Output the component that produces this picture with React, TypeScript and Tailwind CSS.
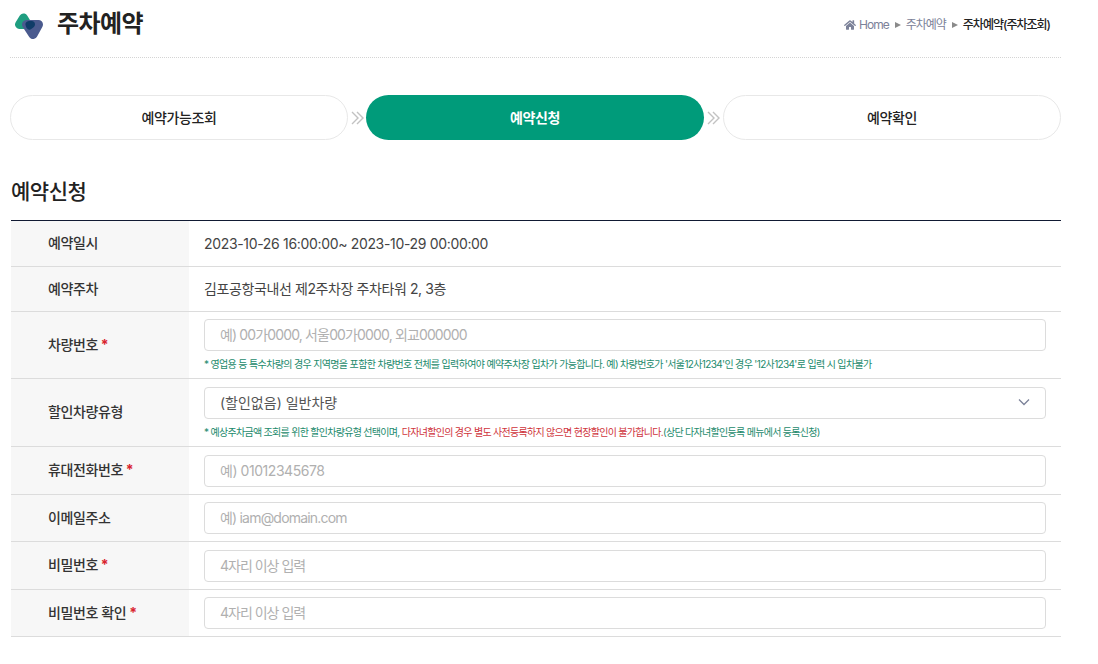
import React from "react";
import { FaHome } from "react-icons/fa";

const font = { fontFamily: '"Inter","Noto Sans CJK KR",sans-serif' };

function Chev() {
  return (
    <svg width="14" height="14" viewBox="0 0 14 14" className="shrink-0" fill="none" stroke="#c2c2c2" strokeWidth="1.4">
      <path d="M1 1l6 6-6 6M6 1l6 6-6 6" />
    </svg>
  );
}

function Label({ children, req }: { children: React.ReactNode; req?: boolean }) {
  return (
    <div className="w-[178px] shrink-0 bg-[#f7f7f7] pl-[37px] pb-[2px] flex items-center text-[14px] font-medium text-[#333] tracking-[-0.4px]">
      <span>
        {children}
        {req && <span className="text-[#d9232e] font-bold"> *</span>}
      </span>
    </div>
  );
}

function Field({ ph, track }: { ph: string; track: string }) {
  return (
    <div className={`h-[32px] border border-[#dcdcdc] rounded-[4px] bg-white flex items-center pl-[15px] pb-[1px] text-[14px] text-[#b0b0b0] ${track}`}>
      {ph}
    </div>
  );
}

function Row({ h, label, req, children }: { h: string; label: string; req?: boolean; children: React.ReactNode }) {
  return (
    <div className={`flex border-b border-[#dcdcdc] ${h}`}>
      <Label req={req}>{label}</Label>
      <div className="flex-1 pl-[15px] pr-[15px] flex flex-col justify-center">{children}</div>
    </div>
  );
}

export default function App() {
  return (
    <div style={font} className="w-[1098px] h-[664px] bg-white overflow-hidden pl-[10px] relative">
      <div className="w-[1051px]">
        <div className="h-[48px] flex items-center justify-between">
          <div className="flex items-center pl-[4px]">
            <svg width="30" height="28" viewBox="0 0 30 28" className="mt-[3px]">
              <path d="M9.500 6L5.500 12.500L13.500 12.500z" fill="#1f9e80" stroke="#1f9e80" strokeWidth="9" strokeLinejoin="round" />
              <path d="M12.500 12.500L24.500 12.500L19 22.500z" fill="#4a5a8e" stroke="#4a5a8e" strokeWidth="9" strokeLinejoin="round" />
              <path d="M15 12.500L17.500 12.500L15.500 14z" fill="#0f3c68" stroke="#0f3c68" strokeWidth="7" strokeLinejoin="round" />
            </svg>
            <h1 className="ml-[13px] text-[24px] leading-[30px] font-bold text-[#222] tracking-[-0.6px]">주차예약</h1>
          </div>
          <div className="flex items-center text-[12px] tracking-[-1px] text-[#7c8299] pr-[11px] mt-[2px]">
            <FaHome size={12} color="#7c8299" className="mr-[3px]" />
            <span>Home</span>
            <span className="ml-[6px] mr-[5px] w-0 h-0 border-y-[3.500px] border-y-transparent border-l-[6px] border-l-[#8a8a8a]" />
            <span>주차예약</span>
            <span className="ml-[6px] mr-[5px] w-0 h-0 border-y-[3.500px] border-y-transparent border-l-[6px] border-l-[#8a8a8a]" />
            <span className="text-[#222] font-medium">주차예약(주차조회)</span>
          </div>
        </div>
        <div className="mt-[9px] border-t border-dotted border-[#d4d4d4]" />

        <div className="mt-[37px] flex items-center">
          <div className="w-[338px] h-[45px] rounded-full border border-[#e8e8e8] flex items-center justify-center text-[14px] font-medium text-[#222] tracking-[-0.4px]">
            예약가능조회
          </div>
          <div className="w-[18px] flex justify-end pr-[1px]"><Chev /></div>
          <div className="w-[338px] h-[45px] rounded-full bg-[#009b7a] flex items-center justify-center text-[14px] font-bold text-white tracking-[-0.4px]">
            예약신청
          </div>
          <div className="w-[19px] flex justify-end pr-[2px]"><Chev /></div>
          <div className="w-[338px] h-[45px] rounded-full border border-[#e8e8e8] flex items-center justify-center text-[14px] font-medium text-[#222] tracking-[-0.4px]">
            예약확인
          </div>
        </div>

        <h2 className="mt-[37px] ml-[1px] text-[21px] leading-[30px] font-medium text-[#222] tracking-[-0.5px]">예약신청</h2>

        <div className="ml-[1px] mt-[13px] border-t border-[#111a33]">
          <Row h="h-[46px]" label="예약일시">
            <div className="text-[14px] text-[#444] tracking-[-0.33px]">2023-10-26 16:00:00~ 2023-10-29 00:00:00</div>
          </Row>
          <Row h="h-[45px]" label="예약주차">
            <div className="text-[14px] text-[#444] tracking-[-0.4px] pb-[1px]">김포공항국내선 제2주차장 주차타워 2, 3층</div>
          </Row>
          <Row h="h-[67px]" label="차량번호" req>
            <Field ph="예) 00가0000, 서울00가0000, 외교000000" track="tracking-[-0.86px]" />
            <div className="mt-[6px] text-[10px] leading-[14px] text-[#1c8a6c] tracking-[-0.65px] whitespace-nowrap">
              * 영업용 등 특수차량의 경우 지역명을 포함한 차량번호 전체를 입력하여야 예약주차장 입차가 가능합니다. 예) 차량번호가 '서울12사1234'인 경우 '12사1234'로 입력 시 입차불가
            </div>
          </Row>
          <Row h="h-[68px]" label="할인차량유형">
            <div className="h-[32px] border border-[#dcdcdc] rounded-[4px] bg-white flex items-center justify-between pl-[15px] pr-[15px] pb-[1px] text-[14px] text-[#555]">
              <span>(할인없음) 일반차량</span>
              <svg width="12" height="8" viewBox="0 0 12 8" fill="none" stroke="#7c8299" strokeWidth="1.3">
                <path d="M1 1.500l5 5 5-5" />
              </svg>
            </div>
            <div className="mt-[6px] text-[10px] leading-[14px] text-[#1c8a6c] tracking-[-0.7px] whitespace-nowrap">
              * 예상주차금액 조회를 위한 할인차량유형 선택이며, <span className="text-[#cf333b]">다자녀할인의 경우 별도 사전등록하지 않으면 현장할인이 불가합니다.</span>(상단 다자녀할인등록 메뉴에서 등록신청)
            </div>
          </Row>
          <Row h="h-[48px]" label="휴대전화번호" req>
            <Field ph="예) 01012345678" track="tracking-[-0.45px]" />
          </Row>
          <Row h="h-[47px]" label="이메일주소">
            <Field ph="예) iam@domain.com" track="tracking-[-0.8px]" />
          </Row>
          <Row h="h-[48px]" label="비밀번호" req>
            <Field ph="4자리 이상 입력" track="tracking-[-1px]" />
          </Row>
          <Row h="h-[47px]" label="비밀번호 확인" req>
            <Field ph="4자리 이상 입력" track="tracking-[-1px]" />
          </Row>
        </div>
      </div>
    </div>
  );
}
